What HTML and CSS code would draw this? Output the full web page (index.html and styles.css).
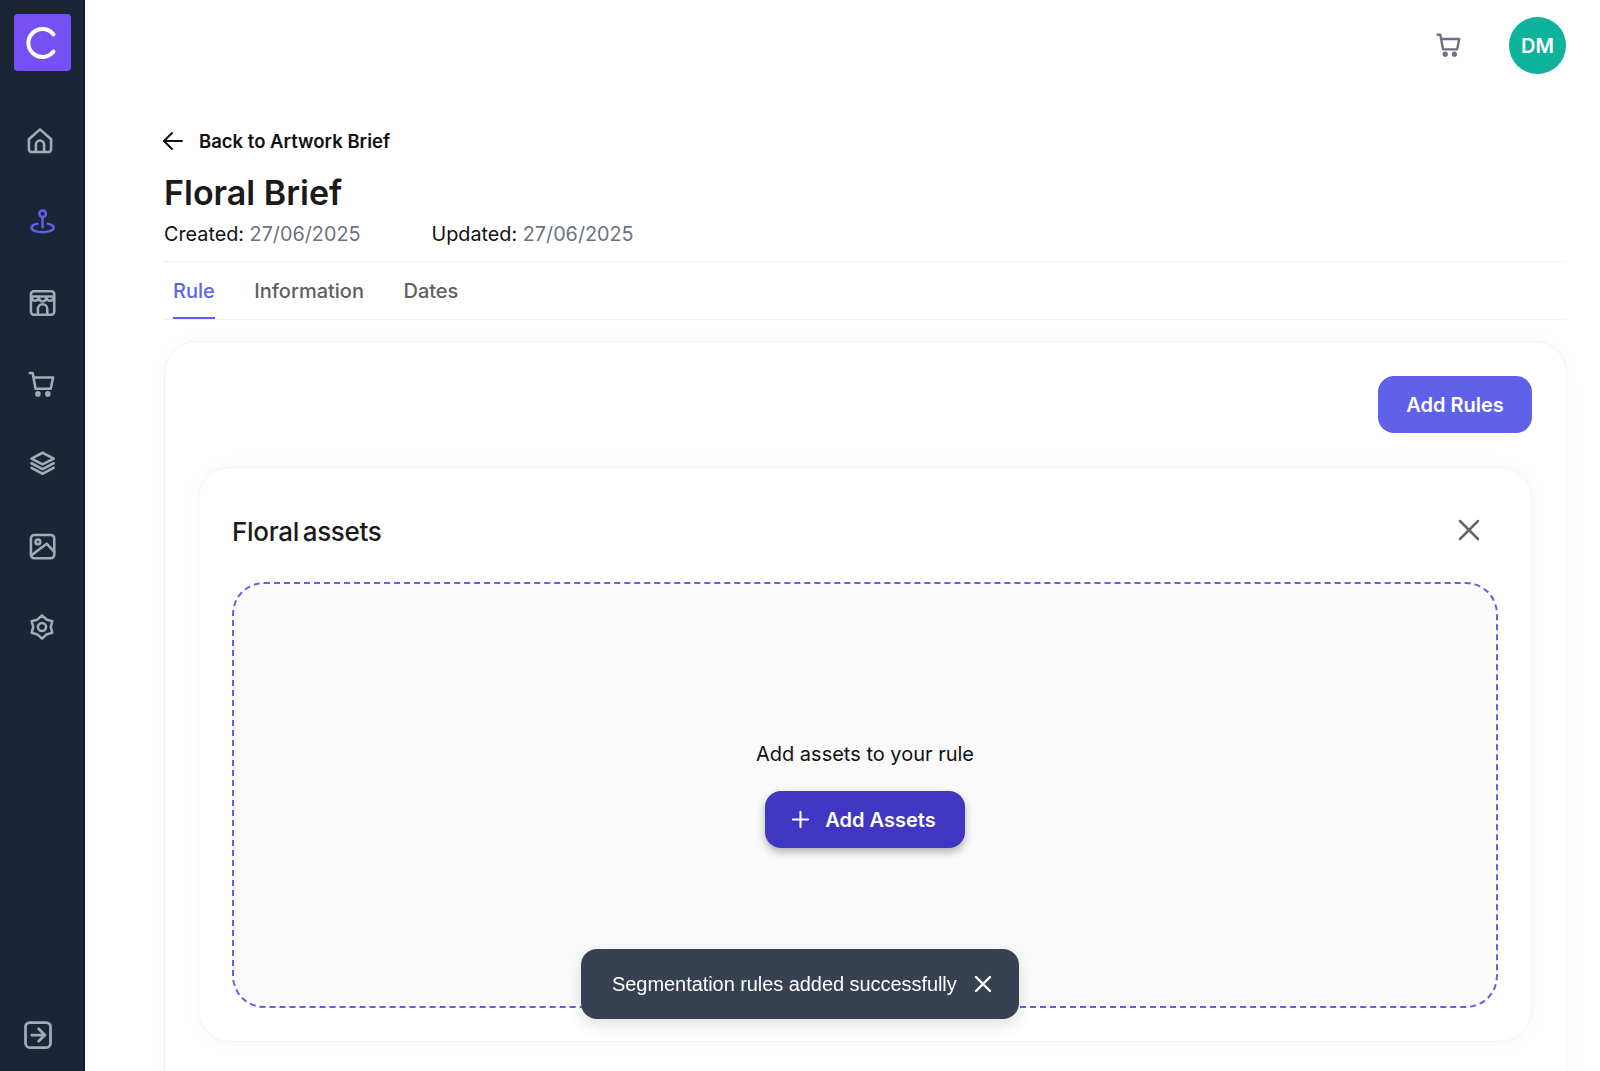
FILE: index.html
```html
<!DOCTYPE html>
<html lang="en">
<head>
    <meta charset="UTF-8">
    <meta name="viewport" content="width=device-width, initial-scale=1.0">
    <title>Floral Brief</title>
    <link rel="stylesheet" href="styles.css">
</head>
<body>
    <aside class="sidebar">
        <div class="logo">
            <svg width="36" height="36" viewBox="0 0 36 36" fill="none" stroke="#fff" stroke-width="4" stroke-linecap="round"><path d="M29.500 9.500A14 14 0 1 0 29.500 26.500"/></svg>
        </div>
        <nav class="nav">
            <svg class="nav-icon home" viewBox="0 0 24 24"><path d="M2.500 10.500 12 2l9.500 8.500V19a2.500 2.500 0 0 1-2.500 2.500H5A2.500 2.500 0 0 1 2.500 19z"/><path d="M8.500 21.500V15a3.500 3.500 0 0 1 7 0v6.500"/></svg>
            <svg class="nav-icon active" viewBox="0 0 24 24"><circle cx="12.500" cy="5" r="2.800"/><path d="M12.500 8v8.500"/><path d="M8 13.600c-3 .7-5 1.900-5 3.400 0 2 4.200 3.800 9.500 3.800s9.500-1.800 9.500-3.800c0-1.500-2-2.700-5-3.400"/></svg>
            <svg class="nav-icon" viewBox="0 0 24 24"><rect x="2.500" y="2" width="20" height="20" rx="2.500"/><path d="M3 6.500h19"/><path d="M3 7.500a3.200 3.200 0 0 0 6.300 0 3.200 3.200 0 0 0 6.400 0 3.200 3.200 0 0 0 6.300 0"/><path d="M8.500 21.500V17a4 4 0 0 1 8 0v4.500"/></svg>
            <svg class="nav-icon" viewBox="0 0 24 24"><path d="M1.500 2.500H4l2.500 13.500h13L21.500 6.500H5"/><circle cx="8.500" cy="20.500" r="1.300"/><circle cx="17" cy="20.500" r="1.300"/></svg>
            <svg class="nav-icon" viewBox="0 0 24 24"><path d="M12.500 1.500 22 6.500l-9.500 5-9.500-5z"/><path d="M3 10.500l9.500 5 9.500-5"/><path d="M3 14.500l9.500 5 9.500-5"/></svg>
            <svg class="nav-icon" viewBox="0 0 24 24"><rect x="2.500" y="2.500" width="20" height="20" rx="3"/><circle cx="8.500" cy="8.500" r="2"/><path d="M3 20 16 10l6.500 7"/></svg>
            <svg class="nav-icon" viewBox="0 0 24 24"><path d="M12 2l3.750 3.500 5.100 1.500-1.350 5 1.350 5-5.100 1.500L12 22l-3.750-3.500-5.100-1.500 1.350-5-1.350-5 5.100-1.500z"/><circle cx="12" cy="12" r="3.500"/></svg>
        </nav>
        <svg class="nav-icon exit" viewBox="0 0 24 24"><rect x="2" y="2" width="20" height="20" rx="3.500"/><path d="M7 12h10"/><path d="M12.500 7l5 5-5 5"/></svg>
    </aside>

    <main class="main">
        <header class="topbar">
            <svg class="top-cart" viewBox="0 0 24 24"><path d="M1.500 2.500H4l2.500 13.500h13L21.500 6.500H5"/><circle cx="8.500" cy="20.500" r="1.300"/><circle cx="17" cy="20.500" r="1.300"/></svg>
            <div class="avatar">DM</div>
        </header>

        <div class="back">
            <svg class="back-arrow" width="22" height="22" viewBox="0 0 22 22" fill="none" stroke="#111" stroke-width="2" stroke-linecap="round" stroke-linejoin="round"><path d="M20 11H2"/><path d="M10 3l-8 8 8 8"/></svg>
            <span>Back to Artwork Brief</span>
        </div>
        <h1>Floral Brief</h1>
        <div class="meta">
            <span>Created: <em>27/06/2025</em></span>
            <span>Updated: <em>27/06/2025</em></span>
        </div>

        <div class="tabs">
            <div class="tab tab-active">Rule</div>
            <div class="tab">Information</div>
            <div class="tab">Dates</div>
        </div>

        <section class="card">
            <div class="card-actions">
                <button class="btn-rules">Add Rules</button>
            </div>
            <div class="rule">
                <div class="rule-head">
                    <h2>Floral assets</h2>
                    <svg class="rule-close" width="24" height="24" viewBox="0 0 24 24" fill="none" stroke="#666" stroke-width="2.500" stroke-linecap="round"><path d="M3 3l18 18"/><path d="M21 3 3 21"/></svg>
                </div>
                <div class="dropzone">
                    <p>Add assets to your rule</p>
                    <button class="btn-assets">
                        <svg width="19" height="19" viewBox="0 0 20 20" fill="none" stroke="#fff" stroke-width="2.200" stroke-linecap="round"><path d="M10 2v16"/><path d="M2 10h16"/></svg>
                        Add Assets
                    </button>
                </div>
            </div>
        </section>
    </main>

    <div class="toast">
        <span>Segmentation rules added successfully</span>
        <svg width="18" height="18" viewBox="0 0 18 18" fill="none" stroke="#fff" stroke-width="2.400" stroke-linecap="round"><path d="M2 2l14 14"/><path d="M16 2 2 16"/></svg>
    </div>
</body>
</html>
```

FILE: styles.css
```css
html, body {
    height: 100%;
}
body {
    margin: 0;
    display: flex;
    overflow: hidden;
    background-color: #fff;
    color: #111;
    font-family: Inter, "Liberation Sans", sans-serif;
}
.sidebar {
    flex: 0 0 85px;
    box-sizing: border-box;
    height: 1071px;
    padding: 14px 0 21px;
    display: flex;
    flex-direction: column;
    align-items: center;
    background-color: #1b2537;
    border-right: 1px solid #10151f;
}
.logo {
    width: 57px;
    height: 57px;
    margin-bottom: 56px;
    border-radius: 4px;
    background-color: #7551f4;
    display: flex;
    align-items: center;
    justify-content: center;
}
.nav {
    display: flex;
    flex-direction: column;
    gap: 53px;
    flex: 1;
}
.nav-icon {
    width: 28px;
    height: 28px;
    fill: none;
    stroke: #a3abb8;
    stroke-width: 2.200;
    stroke-linecap: round;
    stroke-linejoin: round;
}
.nav-icon.active {
    stroke: #5f62e8;
}
.nav-icon.home {
    margin-left: -2px;
}
.nav-icon.exit {
    width: 30px;
    height: 30px;
    margin-left: -8px;
}
.main {
    flex: 1;
    min-width: 0;
    padding: 0 33px 0 79px;
}
.topbar {
    height: 91px;
    padding: 17px 1px 0 0;
    box-sizing: border-box;
    display: flex;
    justify-content: flex-end;
    align-items: flex-start;
    gap: 47px;
}
.top-cart {
    width: 26px;
    height: 26px;
    margin-top: 15px;
    fill: none;
    stroke: #6b7080;
    stroke-width: 2.200;
    stroke-linecap: round;
    stroke-linejoin: round;
}
.avatar {
    width: 57px;
    height: 57px;
    border-radius: 50%;
    background-color: #0fb39b;
    color: #fff;
    font-size: 20px;
    font-weight: 600;
    display: flex;
    align-items: center;
    justify-content: center;
}
.back {
    margin-top: 38px;
    height: 24px;
    display: flex;
    align-items: center;
    gap: 15px;
    font-size: 18.5px;
    font-weight: 600;
}
.back-arrow {
    margin-left: -2px;
}
h1 {
    margin: 20px 0 0;
    font-size: 34px;
    line-height: 40px;
    font-weight: 600;
    color: #1a1a1a;
}
.meta {
    margin-top: 9px;
    height: 27px;
    padding-bottom: 12px;
    display: flex;
    gap: 71px;
    font-size: 19.8px;
    line-height: 24px;
    border-bottom: 1px solid #efefef;
}
.meta em {
    font-style: normal;
    color: #6b7280;
}
.tabs {
    display: flex;
    gap: 39.5px;
    padding-left: 9px;
    border-bottom: 1px solid #f0f0f0;
}
.tab {
    height: 57px;
    box-sizing: border-box;
    padding-top: 17px;
    font-size: 20px;
    line-height: 24px;
    font-weight: 500;
    color: #5f5f5f;
}
.tab-active {
    color: #5f62e8;
    border-bottom: 2px solid #5f62e8;
}
.card {
    margin-top: 21px;
    height: 800px;
    box-sizing: border-box;
    padding: 34px 34px 34px 33px;
    border: 1px solid #f3f3f3;
    border-radius: 32px;
    background-color: #fff;
    box-shadow: 0 0 24px rgba(0,0,0,0.025);
}
.card-actions {
    display: flex;
    justify-content: flex-end;
    margin-bottom: 34px;
}
.btn-rules {
    width: 154px;
    height: 57px;
    border: none;
    border-radius: 16px;
    background-color: #5f62e8;
    color: #fff;
    font-family: inherit;
    font-size: 20px;
    font-weight: 600;
}
.rule {
    height: 575px;
    box-sizing: border-box;
    padding: 33px 33px 33px;
    border: 1px solid #f5f5f5;
    border-radius: 32px;
    background-color: #fff;
    box-shadow: 0 0 24px rgba(0,0,0,0.03);
}
.rule-head {
    height: 81px;
    display: flex;
    justify-content: space-between;
    padding-right: 17px;
}
h2 {
    margin: 15px 0 0;
    font-size: 26px;
    line-height: 32px;
    font-weight: 500;
    letter-spacing: -0.3px;
    word-spacing: -3px;
    color: #1a1a1a;
}
.rule-close {
    margin-top: 17px;
}
.dropzone {
    height: 426px;
    box-sizing: border-box;
    border: 2px dashed #5f62e8;
    border-radius: 32px;
    background-color: #fafafa;
    display: flex;
    flex-direction: column;
    align-items: center;
    padding-top: 158px;
}
.dropzone p {
    margin: 0 0 25px;
    font-size: 20px;
    line-height: 24px;
    color: #111;
}
.btn-assets {
    width: 200px;
    height: 57px;
    padding: 0 3px 0 0;
    border: none;
    border-radius: 16px;
    background-color: #4136c1;
    color: #fff;
    font-family: inherit;
    font-size: 20px;
    font-weight: 600;
    display: flex;
    align-items: center;
    justify-content: center;
    gap: 15px;
    box-shadow: 0 4px 8px rgba(0,0,0,0.3);
}
.toast {
    position: fixed;
    left: 581px;
    top: 949px;
    width: 438px;
    height: 70px;
    box-sizing: border-box;
    padding: 0 27px 0 31px;
    border-radius: 16px;
    background-color: #374151;
    color: #fff;
    font-family: "Liberation Sans", Arial, sans-serif;
    font-size: 20px;
    letter-spacing: -0.06px;
    display: flex;
    align-items: center;
    justify-content: space-between;
    box-shadow: 0 6px 16px rgba(0,0,0,0.12);
}
```
